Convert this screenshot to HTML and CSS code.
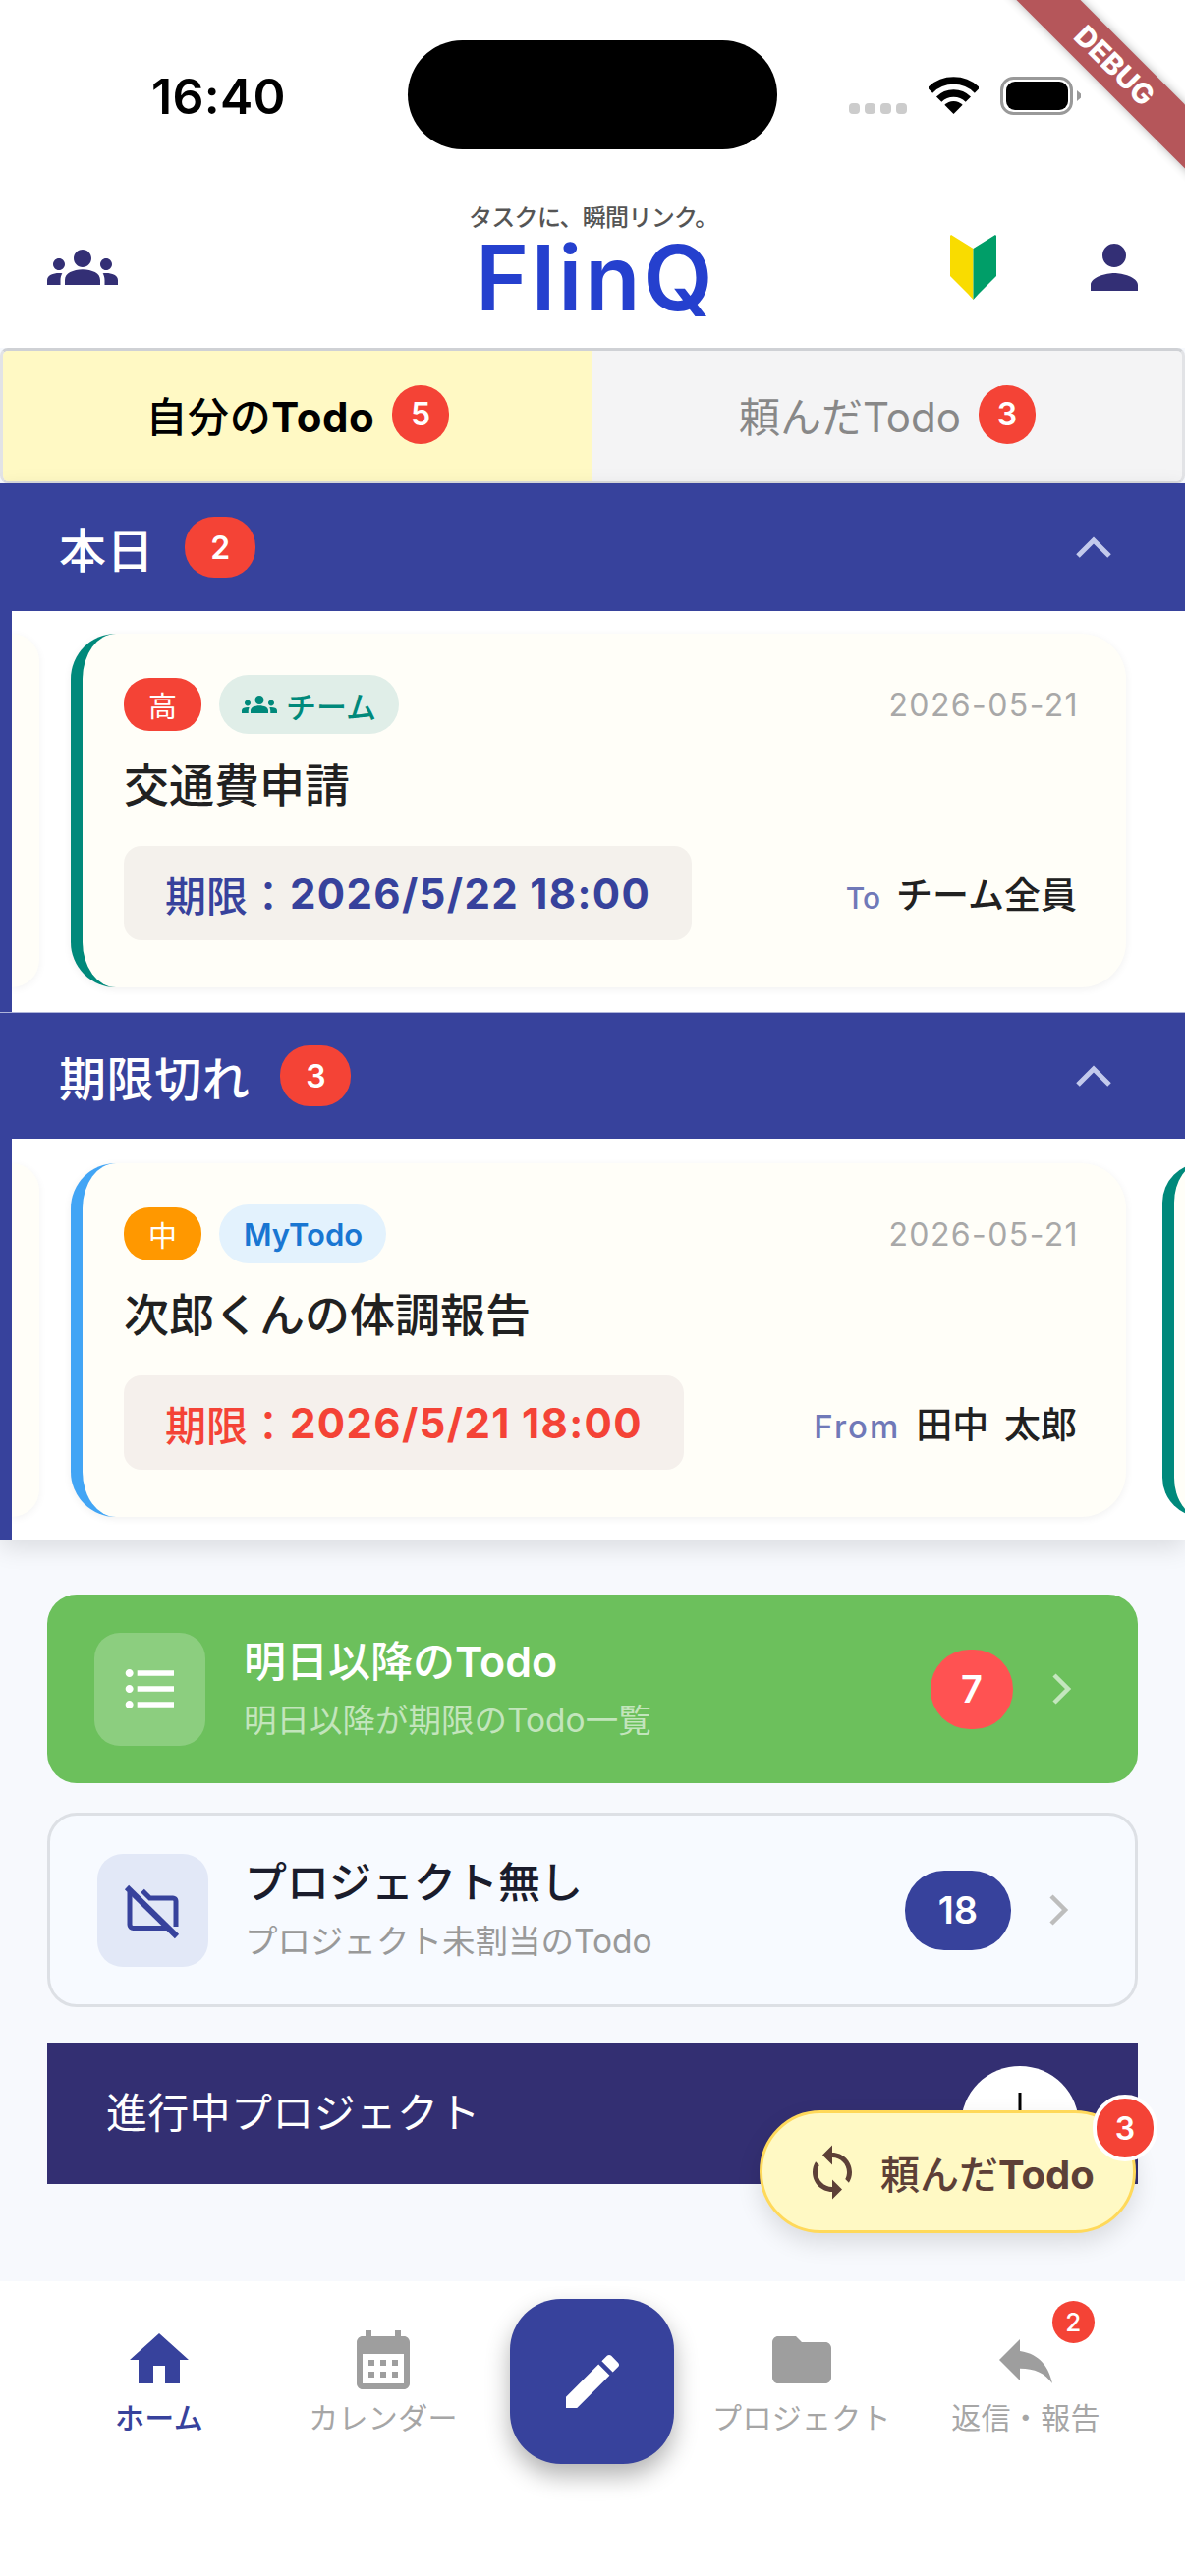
FILE: index.html
```html
<!DOCTYPE html>
<html lang="ja">
<head>
	<meta charset="UTF-8">
	<title>FlinQ</title>
	<link rel="stylesheet" href="styles.css">
</head>
<body>
	<div id="page">
		<div class="island"></div>
		<div class="debug-banner">DEBUG</div>

		<div class="status-bar">
			<span class="time">16:40</span>
			<div class="status-right">
				<div class="signal"><i></i><i></i><i></i><i></i></div>
				<svg class="wifi" viewBox="0 0 51 38"><path d="M1.500 14 A34 34 0 0 1 49.500 14 M10.650 23.150 A21 21 0 0 1 40.350 23.150" fill="none" stroke="#000" stroke-width="7.500"/><path d="M25.500 38 L16.300 28.800 A13 13 0 0 1 34.700 28.800 Z" fill="#000"/></svg>
				<svg class="battery" viewBox="0 0 82 39"><rect x="1.500" y="1.500" width="71" height="36" rx="12" fill="none" stroke="#999" stroke-width="3"/><rect x="6" y="5" width="63" height="29" rx="9" fill="#000"/><path d="M78 14 L82 17.500 V21.500 L78 25 Z" fill="#999"/></svg>
			</div>
		</div>

		<div class="app-bar">
			<svg class="icon-72 navy" viewBox="0 0 24 24"><path d="M12 12.750c1.630 0 3.070.390 4.240.900 1.080.480 1.760 1.560 1.760 2.730V18H6v-1.610c0-1.180.680-2.260 1.760-2.730 1.170-.520 2.610-.910 4.240-.910zM4 13c1.100 0 2-.900 2-2s-.900-2-2-2-2 .900-2 2 .900 2 2 2zm1.130 1.100C4.760 14.040 4.390 14 4 14c-.990 0-1.930.210-2.780.580C.480 14.900 0 15.620 0 16.430V18h4.500v-1.610c0-.830.230-1.610.630-2.290zM20 13c1.100 0 2-.900 2-2s-.900-2-2-2-2 .900-2 2 .900 2 2 2zm4 3.430c0-.810-.480-1.530-1.220-1.850C21.930 14.210 20.990 14 20 14c-.390 0-.760.040-1.130.100.400.680.630 1.460.630 2.290V18H24v-1.570zM12 6c1.660 0 3 1.340 3 3s-1.340 3-3 3-3-1.340-3-3 1.340-3 3-3z"/></svg>
			<div class="logo">
				<div class="logo-tag">タスクに、瞬間リンク。</div>
				<div class="logo-name">FlinQ</div>
			</div>
			<div class="app-actions">
				<svg class="beginner" viewBox="0 0 47 66"><path d="M1 0 L23.500 14 V66 L18 60 L0 42 V1 Z" fill="#F9DC00"/><path d="M46 0 L23.500 14 V66 L29 60 L47 42 V1 Z" fill="#009E68"/></svg>
				<svg class="icon-72 navy" viewBox="0 0 24 24"><path d="M12 12c2.210 0 4-1.790 4-4s-1.790-4-4-4-4 1.790-4 4 1.790 4 4 4zm0 2c-2.670 0-8 1.340-8 4v2h16v-2c0-2.660-5.330-4-8-4z"/></svg>
			</div>
		</div>

		<div class="tabs">
			<div class="tab tab-on"><span><span class="jp">自分の</span>Todo</span> <span class="badge">5</span></div>
			<div class="tab">頼んだTodo <span class="badge">3</span></div>
		</div>

		<div class="sections">
			<div class="sec-head">
				<span class="sec-title">本日</span>
				<span class="badge badge-sec">2</span>
				<svg class="icon-72 chevron-up" viewBox="0 0 72 72"><path d="M20 45 L36 29 L52 45"/></svg>
			</div>
			<div class="sec-body">
				<div class="stub"></div>
				<div class="card card-teal">
					<div class="card-top">
						<span class="tag tag-high">高</span>
						<span class="chip chip-team">
							<svg class="chip-icon" viewBox="0 0 24 24"><path d="M12 12.750c1.630 0 3.070.390 4.240.900 1.080.480 1.760 1.560 1.760 2.730V18H6v-1.610c0-1.180.680-2.260 1.760-2.730 1.170-.520 2.610-.910 4.240-.910zM4 13c1.100 0 2-.900 2-2s-.900-2-2-2-2 .900-2 2 .900 2 2 2zm1.130 1.100C4.760 14.040 4.390 14 4 14c-.990 0-1.930.210-2.780.580C.480 14.900 0 15.620 0 16.430V18h4.500v-1.610c0-.830.230-1.610.630-2.290zM20 13c1.100 0 2-.900 2-2s-.900-2-2-2-2 .900-2 2 .900 2 2 2zm4 3.430c0-.810-.480-1.530-1.220-1.850C21.930 14.210 20.990 14 20 14c-.390 0-.760.040-1.130.100.400.680.630 1.460.630 2.290V18H24v-1.570zM12 6c1.660 0 3 1.340 3 3s-1.340 3-3 3-3-1.340-3-3 1.340-3 3-3z"/></svg>
							チーム
						</span>
						<span class="date">2026-05-21</span>
					</div>
					<div class="card-title">交通費申請</div>
					<div class="card-bottom">
						<div class="deadline">期限：<b>2026/5/22 18:00</b></div>
						<div class="who"><span class="who-to">To</span> チーム全員</div>
					</div>
				</div>
			</div>

			<div class="sec-head sec-head-2">
				<span class="sec-title">期限切れ</span>
				<span class="badge badge-sec">3</span>
				<svg class="icon-72 chevron-up" viewBox="0 0 72 72"><path d="M20 45 L36 29 L52 45"/></svg>
			</div>
			<div class="sec-body sec-body-2">
				<div class="stub"></div>
				<div class="card card-blue">
					<div class="card-top">
						<span class="tag tag-mid">中</span>
						<span class="chip chip-my">MyTodo</span>
						<span class="date">2026-05-21</span>
					</div>
					<div class="card-title">次郎くんの体調報告</div>
					<div class="card-bottom">
						<div class="deadline deadline-late">期限：<b>2026/5/21 18:00</b></div>
						<div class="who"><span class="who-from">From</span> 田中 太郎</div>
					</div>
				</div>
				<div class="next-card"></div>
			</div>
		</div>

		<div class="lists">
			<div class="row row-green">
				<div class="row-icon">
					<svg class="icon-64" viewBox="0 0 24 24"><path d="M4 10.500c-.830 0-1.500.670-1.500 1.500s.670 1.500 1.500 1.500 1.500-.670 1.500-1.500-.670-1.500-1.500-1.500zm0-6c-.830 0-1.500.670-1.500 1.500S3.170 7.500 4 7.500 5.500 6.830 5.500 6 4.830 4.500 4 4.500zm0 12c-.830 0-1.500.680-1.500 1.500s.680 1.500 1.500 1.500 1.500-.680 1.500-1.500-.670-1.500-1.500-1.500zM7 19h14v-2H7v2zm0-6h14v-2H7v2zm0-8v2h14V5H7z"/></svg>
				</div>
				<div class="row-text">
					<div class="row-title"><span class="jp">明日以降の</span>Todo</div>
					<div class="row-sub">明日以降が期限のTodo一覧</div>
				</div>
				<span class="count count-red">7</span>
				<svg class="row-chevron" viewBox="0 0 58 58"><path d="M21 15 L35 29 L21 43"/></svg>
			</div>

			<div class="row row-plain">
				<div class="row-icon">
					<svg class="icon-60 folder-off" viewBox="0 0 60 60"><path d="M6 12 V45 a3.500 3.500 0 0 0 3.500 3.500 H46 M19 10.500 L26.500 18 H50 a3 3 0 0 1 3 3 V47"/><path class="slash" d="M3 7 L54 57"/></svg>
				</div>
				<div class="row-text">
					<div class="row-title">プロジェクト無し</div>
					<div class="row-sub">プロジェクト未割当のTodo</div>
				</div>
				<span class="count count-blue">18</span>
				<svg class="row-chevron" viewBox="0 0 58 58"><path d="M21 15 L35 29 L21 43"/></svg>
			</div>

			<div class="project-head">
				<span class="project-title">進行中プロジェクト</span>
				<span class="add-btn">
					<svg class="icon-72 plus" viewBox="0 0 72 72"><path d="M36 3 V69 M3 36 H69"/></svg>
				</span>
			</div>
		</div>

		<div class="fab">
			<svg class="icon-60" viewBox="0 0 24 24"><path d="M12 4V1L8 5l4 4V6c3.310 0 6 2.690 6 6 0 1.010-.250 1.970-.700 2.800l1.460 1.460C19.540 15.030 20 13.570 20 12c0-4.420-3.580-8-8-8zm0 14c-3.310 0-6-2.690-6-6 0-1.010.250-1.970.700-2.800L5.240 7.740C4.460 8.970 4 10.430 4 12c0 4.420 3.580 8 8 8v3l4-4-4-4v3z"/></svg>
			<span><span class="jp">頼んだ</span>Todo</span>
			<span class="badge fab-badge">3</span>
		</div>

		<div class="nav">
			<div class="nav-item nav-on">
				<svg class="icon-72" viewBox="0 0 24 24"><path d="M10 20v-6h4v6h5v-8h3L12 3 2 12h3v8z"/></svg>
				<span>ホーム</span>
			</div>
			<div class="nav-item">
				<svg class="icon-72" viewBox="0 0 24 24"><path d="M19 4h-1V2h-2v2H8V2H6v2H5c-1.110 0-1.990.900-1.990 2L3 20c0 1.100.890 2 2 2h14c1.100 0 2-.900 2-2V6c0-1.100-.900-2-2-2zm0 16H5V10h14v10zM9 14H7v-2h2v2zm4 0h-2v-2h2v2zm4 0h-2v-2h2v2zm-8 4H7v-2h2v2zm4 0h-2v-2h2v2zm4 0h-2v-2h2v2z"/></svg>
				<span>カレンダー</span>
			</div>
			<div class="nav-add">
				<svg class="icon-72" viewBox="0 0 24 24"><path d="M3 17.250V21h3.750L17.810 9.940l-3.750-3.750L3 17.250zM20.710 7.040c.390-.390.390-1.020 0-1.410l-2.340-2.340c-.390-.390-1.020-.390-1.410 0l-1.830 1.830 3.750 3.750 1.830-1.830z"/></svg>
			</div>
			<div class="nav-item">
				<svg class="icon-72" viewBox="0 0 24 24"><path d="M10 4H4c-1.100 0-1.990.900-1.990 2L2 18c0 1.100.900 2 2 2h16c1.100 0 2-.900 2-2V8c0-1.100-.900-2-2-2h-8l-2-2z"/></svg>
				<span>プロジェクト</span>
			</div>
			<div class="nav-item">
				<svg class="icon-72" viewBox="0 0 24 24"><path d="M10 9V5l-7 7 7 7v-4.100c5 0 8.500 1.600 11 5.100-1-5-4-10-11-11z"/></svg>
				<span>返信・報告</span>
				<span class="badge nav-badge">2</span>
			</div>
		</div>
	</div>
</body>
</html>
```

FILE: styles.css
```css
* {
	box-sizing: border-box;
}
body {
	margin: 0;
	font-family: Inter, "Noto Sans CJK JP", sans-serif;
	color: #212121;
}
#page {
	position: relative;
	display: flex;
	flex-direction: column;
	width: 1206px;
	height: 2622px;
	overflow: hidden;
	background-color: #F7F9FD;
}
svg {
	display: block;
	flex-shrink: 0;
	fill: currentColor;
}
.icon-72 {
	width: 72px;
	height: 72px;
}
.icon-64 {
	width: 64px;
	height: 64px;
}
.icon-60 {
	width: 60px;
	height: 60px;
}
.navy {
	color: #332F75;
}
.jp {
	font-weight: 500;
}

/* status bar */
.island {
	position: absolute;
	left: 415px;
	top: 41px;
	width: 376px;
	height: 111px;
	border-radius: 56px;
	background-color: #000;
}
.debug-banner {
	position: absolute;
	left: 934px;
	top: 44px;
	width: 400px;
	height: 46px;
	transform: rotate(45deg);
	background-color: #B5565A;
	box-shadow: 0 0 10px rgba(0,0,0,.3);
	color: #fff;
	font-size: 29px;
	font-weight: 800;
	line-height: 46px;
	text-align: center;
}
.status-bar {
	display: flex;
	height: 190px;
	padding: 68px 106px 0 154px;
	background-color: #fff;
}
.time {
	font-size: 50px;
	font-weight: 600;
	line-height: 60px;
	letter-spacing: .3px;
	color: #000;
}
.status-right {
	display: flex;
	align-items: flex-end;
	gap: 22px;
	height: 39px;
	margin: 10px 0 0 auto;
}
.signal {
	display: flex;
	gap: 5px;
	margin-bottom: 1px;
}
.signal i {
	width: 11px;
	height: 11px;
	border-radius: 4px;
	background-color: #CCC;
}
.wifi {
	width: 51px;
	height: 38px;
	margin-bottom: 1px;
}
.battery {
	width: 82px;
	height: 39px;
}

/* app bar */
.app-bar {
	display: flex;
	align-items: center;
	height: 164px;
	padding: 0 36px 0 48px;
	background-color: #fff;
}
.logo {
	align-self: flex-start;
	margin: 17px 0 0 357px;
}
.logo-tag {
	font-size: 24px;
	font-weight: 500;
	line-height: 30px;
	letter-spacing: -.7px;
	color: #555;
	white-space: nowrap;
}
.logo-name {
	margin: 6px 0 0 7px;
	font-size: 92px;
	font-weight: 600;
	line-height: 80px;
	letter-spacing: 3px;
	color: #2540CE;
}
.app-actions {
	display: flex;
	align-items: center;
	gap: 84px;
	margin-left: auto;
}
.beginner {
	width: 47px;
	height: 66px;
}

/* tabs */
.tabs {
	display: flex;
	height: 138px;
	border: 3px solid #E2E3E6;
	border-top-color: #CFD1D5;
	border-bottom: 2px solid #DADBDE;
	border-radius: 8px;
	overflow: hidden;
	background-color: #F4F4F5;
}
.tab {
	display: flex;
	flex: 1;
	align-items: center;
	justify-content: center;
	gap: 18px;
	padding-bottom: 4px;
	font-size: 42px;
	color: #888;
}
.tab-on {
	flex: none;
	width: 600px;
	background-color: #FFF9C4;
	color: #000;
	font-weight: 700;
	letter-spacing: .6px;
}
.badge {
	display: inline-flex;
	align-items: center;
	justify-content: center;
	width: 58px;
	height: 60px;
	border-radius: 30px;
	background-color: #F44336;
	color: #fff;
	font-size: 32px;
	font-weight: 600;
}

/* today / overdue sections */
.sections {
	position: relative;
	box-shadow: 0 8px 24px rgba(0,0,0,.12);
}
.sec-head {
	display: flex;
	align-items: center;
	height: 130px;
	padding: 0 57px 0 60px;
	background-color: #37429C;
	color: #fff;
}
.sec-head-2 {
	height: 129px;
	border-top: 1px solid #AEB4DA;
}
.sec-title {
	font-size: 48px;
	font-weight: 500;
	letter-spacing: .6px;
}
.badge-sec {
	width: 72px;
	height: 62px;
	margin-left: 31px;
}
.chevron-up {
	margin-left: auto;
	fill: none;
	stroke: #C3CAEC;
	stroke-width: 5;
}
.sec-body {
	display: flex;
	height: 408px;
	padding: 23px 0 25px;
	overflow: hidden;
	border-left: 12px solid #37429C;
	background-color: #fff;
}
.sec-body-2 {
	padding: 25px 0 23px;
}
.stub {
	flex: none;
	width: 28px;
	border-radius: 0 46px 46px 0;
	background-color: #FFFEF8;
	box-shadow: 0 2px 8px rgba(0,0,0,.05);
}
.card {
	display: flex;
	flex: none;
	flex-direction: column;
	width: 1074px;
	margin-left: 32px;
	padding: 42px 50px 48px 42px;
	border-left: 12px solid;
	border-radius: 46px;
	background-color: #FFFEF8;
	box-shadow: 0 2px 8px rgba(0,0,0,.06);
}
.card-teal {
	border-left-color: #00897B;
}
.card-blue {
	border-left-color: #42A5F5;
}
.next-card {
	flex: none;
	width: 80px;
	margin-left: 37px;
	border-left: 12px solid #00897B;
	border-radius: 46px;
	background-color: #FFFEF8;
}
.card-top {
	display: flex;
	align-items: center;
	gap: 18px;
	height: 60px;
}
.tag {
	display: flex;
	align-items: center;
	justify-content: center;
	width: 79px;
	height: 54px;
	border-radius: 26px;
	color: #fff;
	font-size: 29px;
}
.tag-high {
	background-color: #F44336;
}
.tag-mid {
	background-color: #FF9800;
}
.chip {
	display: flex;
	align-items: center;
	height: 60px;
	border-radius: 30px;
	font-size: 31px;
	font-weight: 500;
}
.chip-team {
	gap: 9px;
	width: 183px;
	padding-left: 23px;
	background-color: #E0EEE8;
	color: #00897B;
}
.chip-icon {
	width: 36px;
	height: 36px;
}
.chip-my {
	padding: 0 24px 0 25px;
	background-color: #E3F2FD;
	color: #1976D2;
	font-weight: 600;
}
.date {
	margin: 0 -2px 0 auto;
	font-size: 32px;
	letter-spacing: 1.400px;
	color: #A8A8A8;
}
.card-title {
	margin: 22px 0 32px;
	font-size: 46px;
	font-weight: 500;
	line-height: 60px;
}
.card-bottom {
	display: flex;
	align-items: center;
	justify-content: space-between;
}
.deadline {
	display: flex;
	align-items: center;
	height: 96px;
	padding: 0 42px;
	border-radius: 18px;
	background-color: #F4F1EC;
	color: #37429C;
	font-size: 42px;
	font-weight: 500;
	white-space: nowrap;
}
.deadline b {
	margin-left: 1px;
	font-weight: 700;
	letter-spacing: 1.350px;
}
.deadline-late {
	background-color: #F5F0EC;
	color: #F44336;
}
.who {
	font-size: 37px;
	font-weight: 500;
	word-spacing: 6px;
	white-space: pre;
}
.who-to,
.who-from {
	color: #7079B8;
}
.who-to {
	font-size: 30px;
}
.who-from {
	font-size: 33px;
	letter-spacing: 2px;
}

/* list rows */
.lists {
	display: flex;
	flex-direction: column;
	flex: 1;
	padding: 56px 48px 0;
}
.row {
	display: flex;
	align-items: center;
	border-radius: 30px;
}
.row-green {
	height: 192px;
	padding: 0 68px 0 48px;
	background-color: #6CC05C;
	color: #fff;
}
.row-plain {
	height: 198px;
	margin-top: 30px;
	padding: 0 68px 0 48px;
	border: 3px solid #DDE0E5;
	background-color: #F7FAFF;
}
.row-icon {
	display: flex;
	flex: none;
	align-items: center;
	justify-content: center;
	width: 113px;
	height: 115px;
	border-radius: 26px;
}
.row-green .row-icon {
	background-color: rgba(255,255,255,.22);
}
.row-plain .row-icon {
	background-color: #E2E8F7;
}
.folder-off {
	fill: none;
	stroke: #37429C;
	stroke-width: 5;
}
.folder-off .slash {
	stroke-width: 6;
}
.row-text {
	flex: 1;
	margin-left: 39px;
}
.row-plain .row-text {
	margin-left: 37px;
}
.row-title {
	font-size: 43px;
	font-weight: 600;
	line-height: 56px;
}
.row-sub {
	margin-top: 8px;
	font-size: 33.500px;
	line-height: 48px;
}
.row-green .row-sub {
	color: rgba(255,255,255,.6);
}
.row-plain .row-title {
	color: #1A1C2C;
	font-weight: 500;
}
.row-plain .row-sub {
	color: #999;
}
.count {
	display: flex;
	align-items: center;
	justify-content: center;
	height: 81px;
	border-radius: 40px;
	color: #fff;
	font-size: 38px;
	font-weight: 600;
}
.count-red {
	width: 84px;
	background-color: #FF5252;
}
.count-blue {
	width: 108px;
	background-color: #37429C;
}
.row-chevron {
	width: 58px;
	height: 58px;
	margin: 0 -20px 0 21px;
	fill: none;
	stroke: rgba(255,255,255,.6);
	stroke-width: 4.500;
}
.row-plain .row-chevron {
	margin-left: 20px;
	stroke: #BDBDBD;
}
.project-head {
	display: flex;
	justify-content: space-between;
	align-items: flex-end;
	height: 144px;
	margin-top: 36px;
	padding: 0 60px;
	background-color: #332F72;
	color: #fff;
}
.project-title {
	align-self: center;
	margin-bottom: 8px;
	font-size: 42px;
	letter-spacing: .3px;
}
.add-btn {
	display: flex;
	align-items: center;
	justify-content: center;
	width: 120px;
	height: 120px;
	border-radius: 50% 50% 0 0;
	background-color: #fff;
}
.plus {
	fill: none;
	stroke: #000;
	stroke-width: 3;
}

/* floating button */
.fab {
	position: absolute;
	left: 773px;
	top: 2148px;
	display: flex;
	align-items: center;
	gap: 19px;
	width: 383px;
	height: 125px;
	padding-left: 41px;
	border: 3px solid #FFD95A;
	border-radius: 62px;
	background-color: #FFF9C4;
	box-shadow: 0 10px 24px rgba(0,0,0,.12);
	color: #5D4037;
	font-size: 40px;
	font-weight: 700;
}
.fab-badge {
	position: absolute;
	right: -25px;
	top: -19px;
	width: 66px;
	height: 68px;
	border: 4px solid #fff;
	border-radius: 34px;
}

/* bottom nav */
.nav {
	display: grid;
	grid-template-columns: 228px 228px 198px 228px 228px;
	height: 300px;
	padding: 0 48px;
	background-color: #fff;
}
.nav-item {
	position: relative;
	display: flex;
	flex-direction: column;
	align-items: center;
	padding-top: 44px;
	color: #9E9E9E;
	font-size: 30px;
	line-height: 46px;
	letter-spacing: .3px;
	white-space: nowrap;
}
.nav-item span {
	color: #A6A6A6;
}
.nav-on {
	color: #37429C;
	font-weight: 500;
}
.nav-item.nav-on span {
	color: #37429C;
}
.nav-add {
	display: flex;
	align-items: center;
	justify-content: center;
	width: 167px;
	height: 168px;
	margin: 18px 0 0 15px;
	border-radius: 52px;
	background-color: #37429C;
	box-shadow: 0 12px 24px rgba(0,0,0,.3);
	color: #fff;
}
.nav-item .nav-badge {
	position: absolute;
	right: 44px;
	top: 20px;
	width: 43px;
	height: 43px;
	color: #fff;
	font-size: 26px;
	font-weight: 500;
}
```
